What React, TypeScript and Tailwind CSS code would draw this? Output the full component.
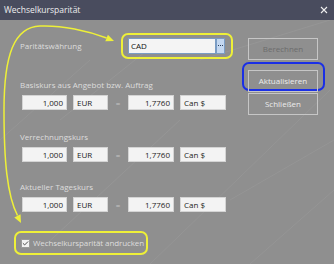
import { Check } from 'lucide-react';

const ROWS = [
  { label: 'Basiskurs aus Angebot bzw. Auftrag', gap: 'mt-[20px]' },
  { label: 'Verrechnungskurs', gap: 'mt-[21px]' },
  { label: 'Aktueller Tageskurs', gap: 'mt-[19px]' },
];

function Field({ value, align, width }: { value: string; align: 'left' | 'right'; width: string }) {
  return (
    <div
      className={`${width} h-[15px] bg-[#f3f3f3] border border-[#d4d4d4] px-[3px] text-[8px] leading-[13px] text-[#1c1c1c] ${
        align === 'right' ? 'text-right' : 'text-left'
      }`}
    >
      {value}
    </div>
  );
}

function RateRow({ label, gap }: { label: string; gap: string }) {
  return (
    <>
      <div className={`${gap} pl-[20px] h-[12px] leading-[12px] text-[8px] text-[#dddddd] whitespace-nowrap`}>{label}</div>
      <div className="mt-[4px] pl-[22px] flex items-center">
        <Field value="1,000" align="right" width="w-[45px]" />
        <div className="ml-[6px]">
          <Field value="EUR" align="left" width="w-[35px]" />
        </div>
        <div className="w-[20px] text-center text-[8px] leading-[15px] text-[#c4c4c4]">=</div>
        <Field value="1,7760" align="right" width="w-[46px]" />
        <div className="ml-[6px]">
          <Field value="Can $" align="left" width="w-[46px]" />
        </div>
      </div>
    </>
  );
}

function Arrows() {
  const y = '#eef038';
  return (
    <svg className="absolute inset-0 pointer-events-none" width="334" height="264" viewBox="0 0 334 264">
      <path
        d="M 17.5 215.5 C 7 195, 4 160, 4 110 C 4 55, 14 27, 40 26 C 62 25, 88 31, 106.6 38"
        fill="none"
        stroke={y}
        strokeWidth="1.5"
      />
      <polygon points="114,41 105.3,41.3 107.9,34.7" fill={y} />
      <polygon points="21,223 14.3,217.4 20.5,214.2" fill={y} />
    </svg>
  );
}

function Scratches() {
  return (
    <svg className="absolute inset-0 pointer-events-none" width="334" height="264" viewBox="0 0 334 264">
      <g stroke="#ffffff" strokeOpacity="0.08" strokeWidth="0.8" fill="none">
        <path d="M 40 250 L 180 120" />
        <path d="M 150 264 L 330 90" />
        <path d="M 230 200 L 334 140" />
        <path d="M 0 140 L 90 60" />
        <path d="M 200 60 L 330 20" />
        <path d="M 60 120 L 160 40" />
        <path d="M 250 264 L 334 190" />
      </g>
    </svg>
  );
}

export default function App() {
  return (
    <div className="relative w-[334px] h-[264px] overflow-hidden bg-[#8f8f8f] font-['Open_Sans',sans-serif]">
      <Scratches />
      <div className="relative h-[20px] bg-[#494c5e] flex items-center justify-between pl-[4px] pr-[6px]">
        <span className="text-[8.5px] text-[#eeeeee]">Wechselkursparität</span>
        <svg width="8" height="8" viewBox="0 0 8 8">
          <path d="M1 1 L7 7 M7 1 L1 7" stroke="#f0f0f0" strokeWidth="1.1" />
        </svg>
      </div>

      <div className="relative flex">
        <div className="w-[242px] flex flex-col">
          <div className="mt-[13px] flex items-center">
            <div className="pl-[20px] w-[121px] text-[8px] text-[#dddddd]">Paritätswährung</div>
            <div className="w-[112px] h-[26px] border-2 border-[#eef038] rounded-[7px] flex items-center pl-[5px]">
              <div className="w-[88px] h-[16px] bg-[#f4f4f4] border border-[#7a9cc4] px-[2px] text-[8px] leading-[14px] text-[#111111]">
                CAD
              </div>
              <div className="w-[9px] h-[16px] bg-[#c3d7f0] border border-[#7a9cc4] flex items-center justify-center">
                <svg width="5" height="2" viewBox="0 0 5 2">
                  <rect x="0" y="0" width="1" height="1" fill="#2b3f5c" />
                  <rect x="2" y="0" width="1" height="1" fill="#2b3f5c" />
                  <rect x="4" y="0" width="1" height="1" fill="#2b3f5c" />
                </svg>
              </div>
            </div>
          </div>

          {ROWS.map((r) => (
            <RateRow key={r.label} label={r.label} gap={r.gap} />
          ))}

          <div className="mt-[19px] ml-[14px] w-[134px] h-[24px] border-2 border-[#eef038] rounded-[7px] flex items-center pl-[5px] gap-[3px]">
            <div className="shrink-0 w-[9px] h-[9px] bg-[#f2f2f2] border border-[#9a9a9a] flex items-center justify-center">
              <Check className="w-[7px] h-[7px] text-[#333333]" strokeWidth={3} />
            </div>
            <span className="text-[8px] tracking-[-0.1px] text-[#dddddd] whitespace-nowrap">Wechselkursparität andrucken</span>
          </div>
        </div>

        <div className="flex flex-col">
          <button className="mt-[18px] ml-[6px] w-[70px] h-[22px] border border-[#c6c6c6] text-[8px] text-[#6c6c6c]">
            Berechnen
          </button>
          <div className="mt-[2px] w-[83px] h-[29px] border-2 border-[#1a2fe6] rounded-[7px] pl-[4px] pt-[2px]">
            <button className="w-[70px] h-[22px] border border-[#c6c6c6] text-[8px] text-[#ececec]">
              Aktualisieren
            </button>
          </div>
          <button className="mt-[2px] ml-[6px] w-[70px] h-[22px] border border-[#c6c6c6] text-[8px] text-[#ececec]">
            Schließen
          </button>
        </div>
      </div>

      <Arrows />
    </div>
  );
}
